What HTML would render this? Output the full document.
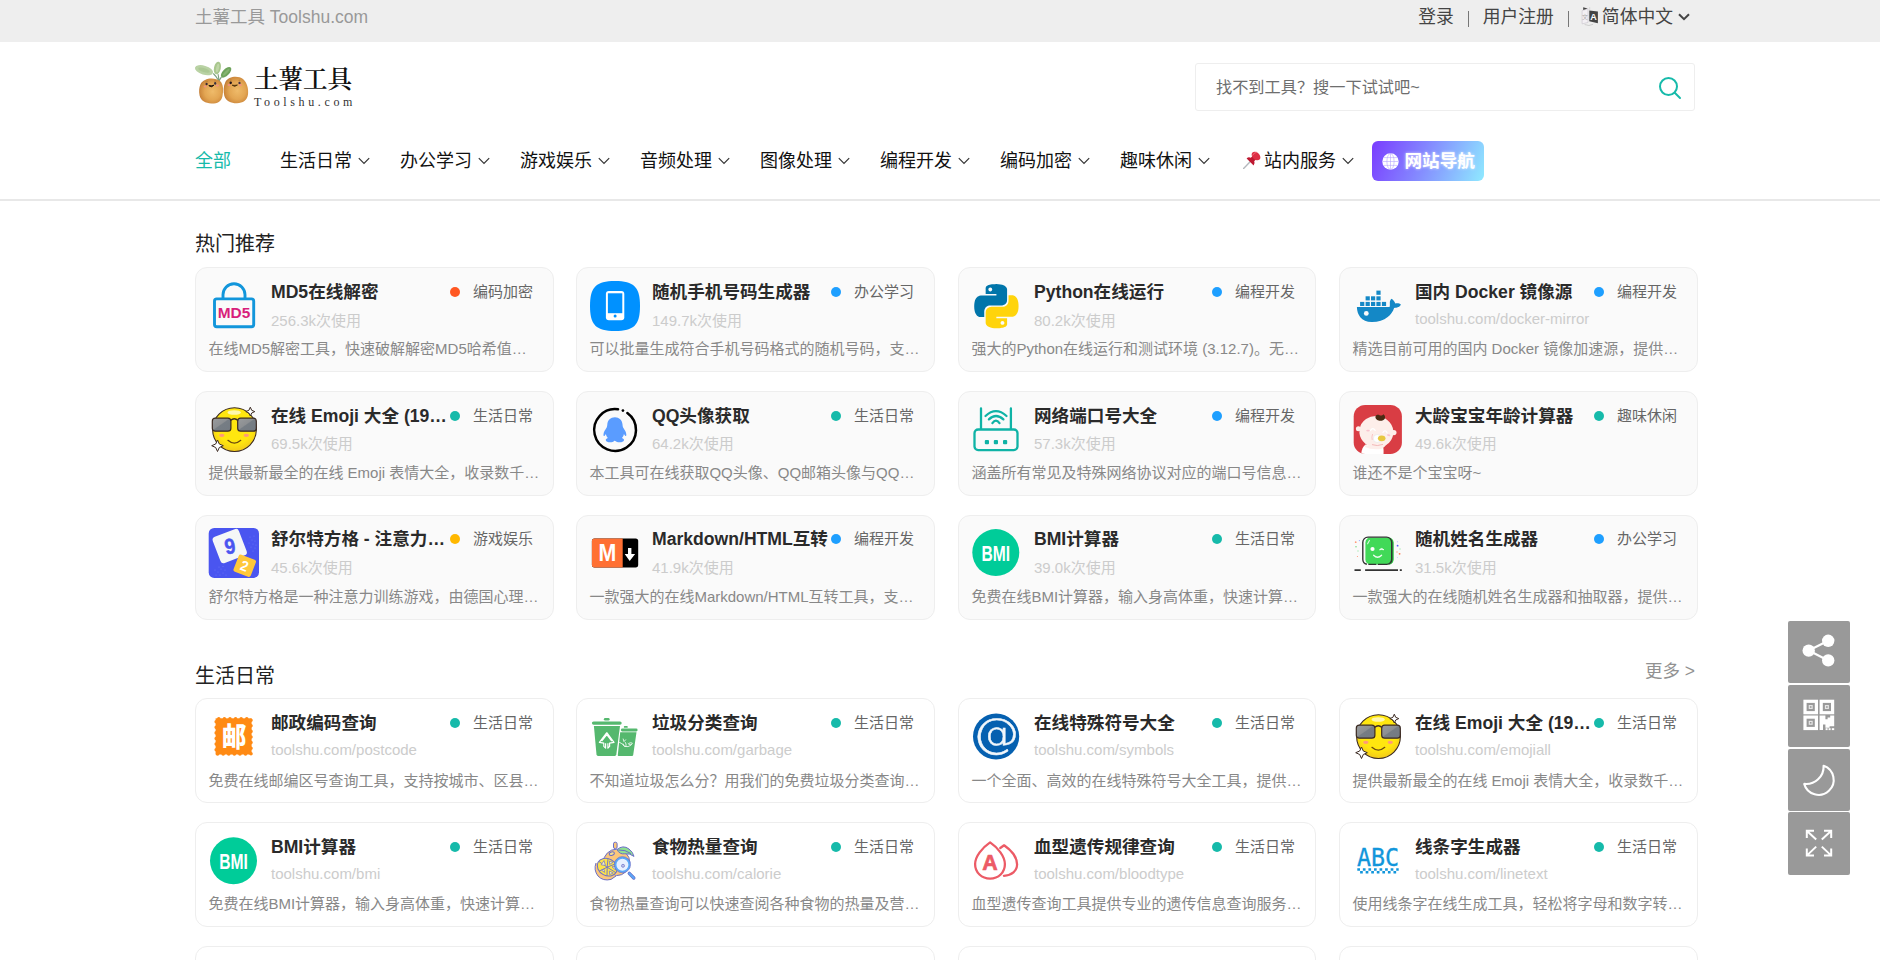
<!DOCTYPE html>
<html lang="zh-CN">
<head>
<meta charset="utf-8">
<title>土薯工具 Toolshu.com</title>
<style>
*{box-sizing:border-box;margin:0;padding:0}
html,body{width:1880px;height:960px;overflow:hidden;background:#fff}
body{font-family:"Liberation Sans","Noto Sans CJK SC",sans-serif;color:#333;position:relative}
a{color:inherit;text-decoration:none}
.topbar{position:absolute;left:0;top:0;width:1880px;height:42px;background:#eee}
.topbar .l{position:absolute;left:195px;top:0;line-height:35px;font-size:17.5px;color:#999}
.topbar .r{position:absolute;right:190px;top:0;height:34.6px;line-height:34.6px;font-size:17.8px;color:#444;white-space:nowrap;display:flex;align-items:center}
.topbar .r .sep{display:block;width:1px;height:16px;background:#777;margin:3px 14px 0 14px}
.topbar .r .chev{margin-left:5px;flex:none}
.logo{position:absolute;left:195px;top:60px;width:160px;height:50px}
.logo .t1{position:absolute;left:59px;top:3.4px;font-family:"Liberation Serif","Noto Serif CJK SC",serif;font-size:24.5px;line-height:34px;color:#111;font-weight:600;white-space:nowrap}
.logo .t2{position:absolute;left:59px;top:35px;font-family:"Liberation Serif",serif;font-size:12px;line-height:14px;letter-spacing:3.62px;color:#333;font-weight:normal;white-space:nowrap}
.search{position:absolute;left:1195px;top:63px;width:500px;height:48px;border:1px solid #eee;border-radius:3px;background:#fff}
.search span{position:absolute;left:20px;top:0;line-height:47px;font-size:16.2px;color:#6e6e6e}
.search svg{position:absolute;right:11px;top:11px}
.nav{position:absolute;left:0;top:141px;width:1880px;height:60px;border-bottom:2px solid #e8e8e8}
.nav .it{position:absolute;top:0;line-height:40px;font-size:18px;color:#111;white-space:nowrap}
.nav .it.on{color:#16baaa}
.nav .it svg{position:absolute;top:16px}
.navbtn{position:absolute;left:1372px;top:0;width:112px;height:40px;border-radius:6px;background:linear-gradient(112deg,#7a3cff 0%,#8590ff 50%,#8feaff 100%);color:#fff;font-size:17.6px;text-shadow:0 0 3px rgba(255,255,255,.7);font-weight:bold;line-height:40px;white-space:nowrap}
.navbtn span{position:absolute;left:32.5px;top:0}
.navbtn svg{position:absolute;left:9.5px;top:12px}
.sec{position:absolute;left:195px;font-size:20px;line-height:28px;color:#222}
.more{position:absolute;right:185px;font-size:17.5px;line-height:24px;color:#919191}
.card{position:absolute;width:358.6px;height:105px;border:1px solid #eee;border-radius:12px;background:#fff;overflow:hidden}
.card.hot{background:#fafafa}
.card .ic{position:absolute;left:13px;top:13px;width:50px;height:50px}
.card .tt{position:absolute;left:75px;top:11px;font-size:17.6px;line-height:26px;font-weight:bold;color:#2a2a2a;white-space:nowrap}
.card .sub{position:absolute;left:75px;top:43px;font-size:15px;line-height:20px;color:#ccc;white-space:nowrap}
.card .tag{position:absolute;right:20px;top:11px;font-size:15px;line-height:26px;color:#666;white-space:nowrap;background:inherit;padding-left:0}
.card .tag i{display:inline-block;width:10px;height:10px;border-radius:50%;margin-right:13px;vertical-align:0px}
.card .ds{position:absolute;left:12.4px;top:70px;font-size:15px;line-height:22px;color:#888;white-space:nowrap}
.card.rd .tt,.card.rd .tag,.card.rd .sub,.card.rb .sub{margin-top:-1px}
.card .sub.url{margin-top:-2px}
.card.rc .ds{margin-top:1px}
.ic svg{overflow:visible;display:block}
.c1{background:#ff5722}.c2{background:#1e9fff}.c3{background:#16baaa}.c4{background:#ffb800}
.side{position:absolute;left:1788px;width:62px;height:62px;background:#999;border-radius:2px}
.side svg{position:absolute;left:0;top:0}
</style>
</head>
<body>
<div class="topbar">
  <div class="l">土薯工具 Toolshu.com</div>
  <div class="r"><span>登录</span><span class="sep"></span><span>用户注册</span><span class="sep" style="margin-right:12px"></span><svg width="18" height="20" viewBox="0 0 17 19" style="margin:-2px 3px 0 0;flex:none"><path d="M1 4.4L6.600000000000001 2.6V15.6L1 17Z" fill="#f3f0f4" stroke="#c9c4cc" stroke-width="0.6"/><text x="3.8" y="12" font-family="Noto Sans CJK SC,sans-serif" font-size="5.6" fill="#aaa" text-anchor="middle">文</text><path d="M2 1.2L6.2 2.4L2 3.7Z" fill="#444"/><path d="M8.2 1V4" stroke="#ccc" stroke-width="0.6"/><path d="M7.8 4.2L16 5.2V16.4L7.8 14.4Z" fill="#444"/><text x="11.9" y="13.6" font-family="Liberation Sans,sans-serif" font-size="8.6" font-weight="bold" fill="#fff" text-anchor="middle">A</text><path d="M3.4 17.6Q7.6 19.6 11.4 17.4" fill="none" stroke="#bbb" stroke-width="0.6"/></svg><span>简体中文</span><svg class="chev" width="12" height="8" viewBox="0 0 12 8" fill="none" stroke="#444" stroke-width="2"><path d="M1 1.2L6 6.2L11 1.2"/></svg></div>
</div>
<div class="logo">
  <svg width="58" height="50" viewBox="0 0 58 50" style="position:absolute;left:-2px;top:0"><defs><radialGradient id="pt1" cx="0.56" cy="0.52" r="0.6"><stop offset="0" stop-color="#efbb6a"/><stop offset="0.55" stop-color="#e3a653"/><stop offset="0.88" stop-color="#cd883c"/><stop offset="1" stop-color="#b06a2c"/></radialGradient><filter id="lgb" x="-5%" y="-5%" width="110%" height="110%"><feGaussianBlur stdDeviation="0.4"/></filter></defs><g filter="url(#lgb)"><path d="M25.9 21Q23.6 16.6 20.3 13.5M25.9 21Q25.8 17 25 14.1M26.2 21Q27 18.6 28.5 17" fill="none" stroke="#7ba07e" stroke-width="1.1"/><ellipse cx="11" cy="10.2" rx="9.4" ry="4.5" transform="rotate(17 11 10.2)" fill="#b9d2a4"/><ellipse cx="11" cy="10.2" rx="6" ry="2" transform="rotate(17 11 10.2)" fill="#a8c690" opacity="0.8"/><ellipse cx="24.4" cy="8" rx="3.4" ry="6.4" transform="rotate(12 24.4 8)" fill="#a9c78e"/><ellipse cx="24.6" cy="8" rx="1.4" ry="4.4" transform="rotate(12 24.4 8)" fill="#c4d9ae" opacity="0.8"/><ellipse cx="33.1" cy="12.3" rx="3.3" ry="6.7" transform="rotate(44 33.1 12.3)" fill="#6ea35c"/><ellipse cx="33.1" cy="12.3" rx="1.2" ry="4.6" transform="rotate(44 33.1 12.3)" fill="#8fba78" opacity="0.7"/><path d="M7.6 24C10.600000000000001 17.6 22 16.8 27 21C30.6 24 30.6 31 29.4 36.4C28.2 41.6 24 43.8 18.4 43.6C12.4 43.4 7.6 40.6 6.6 35.6C5.8 31.6 6 27.4 7.6 24Z" fill="url(#pt1)"/><path d="M32.4 22C35.4 16.2 45 15 50 19C54 22.4 55.8 29 55 34.6C54.2 40.2 50 43.2 44 43.3C38 43.4 33 41 31.4 36C30.2 31.6 30.4 26 32.4 22Z" fill="url(#pt1)"/><ellipse cx="13.6" cy="24" rx="1.1" ry="1.3" fill="#3a2a36"/><ellipse cx="22.2" cy="23.4" rx="1.1" ry="1.3" fill="#3a3040"/><path d="M15.8 25.6Q18.3 28.200000000000003 21 25.2Q18.400000000000002 26 15.8 25.6Z" fill="#1e120c" stroke="#1e120c" stroke-width="0.9" stroke-linejoin="round"/><ellipse cx="12.2" cy="26.4" rx="1.5" ry="1" fill="#f48e88" opacity="0.85"/><ellipse cx="24.4" cy="25.4" rx="1.5" ry="1" fill="#f48e88" opacity="0.85"/><ellipse cx="37.7" cy="22.8" rx="1.2" ry="1.4" fill="#20141a"/><ellipse cx="46.5" cy="23" rx="1.1" ry="1.3" fill="#40304a"/><path d="M39.2 25.200000000000003Q41.6 27.6 44.4 25Q41.800000000000004 25.6 39.2 25.2Z" fill="#50340e" stroke="#50340e" stroke-width="0.9" stroke-linejoin="round"/><ellipse cx="36" cy="24.9" rx="1.5" ry="1" fill="#f48e88" opacity="0.85"/><ellipse cx="47.4" cy="25" rx="1.5" ry="1" fill="#f48e88" opacity="0.85"/><path d="M12.4 21.8Q13.6 21 14.8 21.6M21.2 21.2Q22.4 20.6 23.4 21.4M37 20.4Q37.8 19.8 38.6 20.2M45.6 20.4Q46.4 20 47.2 20.6" fill="none" stroke="#a8742e" stroke-width="0.6"/></g></svg>
  <div class="t1">土薯工具</div>
  <div class="t2">Toolshu.com</div>
</div>
<div class="search"><span>找不到工具？搜一下试试吧~</span>
<svg width="26" height="26" viewBox="0 0 26 26" fill="none" stroke="#16baaa" stroke-width="2" stroke-linecap="round"><circle cx="11.5" cy="11.5" r="8.5"/><path d="M18 18l5 5"/></svg>
</div>
<div class="nav">
  <div class="it on" style="left:195px">全部</div>
  <div class="it" style="left:280px">生活日常<svg width="12" height="8" viewBox="0 0 12 8" fill="none" stroke="#333" stroke-width="1.2" style="left:78px"><path d="M0.8 1.2L6 6.4L11.2 1.2"/></svg></div>
<div class="it" style="left:400px">办公学习<svg width="12" height="8" viewBox="0 0 12 8" fill="none" stroke="#333" stroke-width="1.2" style="left:78px"><path d="M0.8 1.2L6 6.4L11.2 1.2"/></svg></div>
<div class="it" style="left:520px">游戏娱乐<svg width="12" height="8" viewBox="0 0 12 8" fill="none" stroke="#333" stroke-width="1.2" style="left:78px"><path d="M0.8 1.2L6 6.4L11.2 1.2"/></svg></div>
<div class="it" style="left:640px">音频处理<svg width="12" height="8" viewBox="0 0 12 8" fill="none" stroke="#333" stroke-width="1.2" style="left:78px"><path d="M0.8 1.2L6 6.4L11.2 1.2"/></svg></div>
<div class="it" style="left:760px">图像处理<svg width="12" height="8" viewBox="0 0 12 8" fill="none" stroke="#333" stroke-width="1.2" style="left:78px"><path d="M0.8 1.2L6 6.4L11.2 1.2"/></svg></div>
<div class="it" style="left:880px">编程开发<svg width="12" height="8" viewBox="0 0 12 8" fill="none" stroke="#333" stroke-width="1.2" style="left:78px"><path d="M0.8 1.2L6 6.4L11.2 1.2"/></svg></div>
<div class="it" style="left:1000px">编码加密<svg width="12" height="8" viewBox="0 0 12 8" fill="none" stroke="#333" stroke-width="1.2" style="left:78px"><path d="M0.8 1.2L6 6.4L11.2 1.2"/></svg></div>
<div class="it" style="left:1120px">趣味休闲<svg width="12" height="8" viewBox="0 0 12 8" fill="none" stroke="#333" stroke-width="1.2" style="left:78px"><path d="M0.8 1.2L6 6.4L11.2 1.2"/></svg></div>
<div class="it" style="left:1264px">站内服务<svg width="12" height="8" viewBox="0 0 12 8" fill="none" stroke="#333" stroke-width="1.2" style="left:78px"><path d="M0.8 1.2L6 6.4L11.2 1.2"/></svg></div>
<svg width="18" height="18" viewBox="0 0 18 18" style="position:absolute;left:1243px;top:9.5px"><path d="M0.6 17.4L7.4 10.6" stroke="#b4b8bd" stroke-width="1.4" stroke-linecap="round"/><path d="M3.6 7.4L10.6 14.4Q12.4 12.4 11.2 10.2L14.6 6.8L11.2 3.4L7.8 6.800000000000001Q5.6 5.6 3.6 7.4Z" fill="#be1931"/><ellipse cx="13" cy="5" rx="5" ry="3.6" transform="rotate(45 13 5)" fill="#dd2e44"/><path d="M9.6 4.2Q10.8 1.6 13.6 1.2" fill="none" stroke="#f4707f" stroke-width="0.9" stroke-linecap="round"/></svg>
  <div class="navbtn"><svg width="17" height="17" viewBox="0 0 17 17"><circle cx="8.5" cy="8.5" r="8.2" fill="#fff"/><g fill="none" stroke="#a088ff" stroke-width="0.6" opacity="0.75"><ellipse cx="8.5" cy="8.5" rx="3.6" ry="8"/><path d="M8.5 0.5V16.5M0.5 8.5H16.5M1.6 4.6H15.4M1.6 12.4H15.4"/></g></svg><span>网站导航</span></div>
</div>
<div class="sec" style="top:230px">热门推荐</div>
<div class="sec" style="top:662px">生活日常</div>
<div class="more" style="top:659px">更多 &gt;</div>
<div class="card hot ra" style="left:195px;top:267px;width:359px"><div class="ic"><svg width="50" height="50" viewBox="0 0 50 50" fill="none"><g transform="translate(0.2,-0.7)"><path d="M13.8 18.4V14.4a11 11 0 0 1 22 0V18.4" stroke="#1296db" stroke-width="2.9"/><rect x="5.3" y="18.6" width="39.2" height="27.9" rx="2.2" stroke="#1296db" stroke-width="2.9"/><text x="24.8" y="37.6" font-family="Liberation Sans,sans-serif" font-size="15.4" font-weight="bold" fill="#d81e7b" text-anchor="middle">MD5</text></g></svg></div><div class="tt">MD5在线解密</div><div class="tag"><i class="c1"></i>编码加密</div><div class="sub">256.3k次使用</div><div class="ds">在线MD5解密工具，快速破解解密MD5哈希值…</div></div>
<div class="card hot ra" style="left:576px;top:267px;width:359px"><div class="ic"><svg width="50" height="50" viewBox="0 0 50 50"><path d="M25 0C44 0 50 6 50 25C50 44 44 50 25 50C6 50 0 44 0 25C0 6 6 0 25 0Z" fill="#0091ff"/><rect x="15.9" y="10.1" width="18.4" height="29.1" rx="3" fill="#fff"/><rect x="17.9" y="12.3" width="14.4" height="19.9" fill="#0091ff"/><circle cx="25.1" cy="35" r="1.5" fill="#0091ff"/></svg></div><div class="tt">随机手机号码生成器</div><div class="tag"><i class="c2"></i>办公学习</div><div class="sub">149.7k次使用</div><div class="ds">可以批量生成符合手机号码格式的随机号码，支…</div></div>
<div class="card hot ra" style="left:958px;top:267px;width:358px"><div class="ic"><svg width="50" height="50" viewBox="0 0 50 50"><g transform="translate(-0.3,0)"><g transform="translate(2.6,3.1) scale(1.84)"><path fill="#0075aa" d="M14.25.18l.9.2.73.26.59.3.45.32.34.34.25.34.16.33.1.3.04.26.02.2-.01.13V8.5l-.05.63-.13.55-.21.46-.26.38-.3.31-.33.25-.35.19-.35.14-.33.1-.3.07-.26.04-.21.02H8.77l-.69.05-.59.14-.5.22-.41.27-.33.32-.27.35-.2.36-.15.37-.1.35-.07.32-.04.27-.02.21v3.06H3.17l-.21-.03-.28-.07-.32-.12-.35-.18-.36-.26-.36-.36-.35-.46-.32-.59-.28-.73-.21-.88-.14-1.05-.05-1.23.06-1.22.16-1.04.24-.87.32-.71.36-.57.4-.44.42-.33.42-.24.4-.16.36-.1.32-.05.24-.01h.16l.06.01h8.16v-.83H6.18l-.01-2.75-.02-.37.05-.34.11-.31.17-.28.25-.26.31-.23.38-.2.44-.18.51-.15.58-.12.64-.1.71-.06.77-.04.84-.02 1.27.05zM7.95 2.16l-.23.33-.08.41.08.41.23.34.33.22.41.09.41-.09.33-.22.23-.34.08-.41-.08-.41-.23-.33-.33-.22-.41-.09-.41.09z"/><path fill="#ffd40b" d="M21.04 6.11l.28.06.32.12.35.18.36.27.36.35.35.47.32.59.28.73.21.88.14 1.04.05 1.23-.06 1.23-.16 1.04-.24.86-.32.71-.36.57-.4.45-.42.33-.42.24-.4.16-.36.09-.32.05-.24.02-.16-.01h-8.22v.82h5.84l.01 2.76.02.36-.05.34-.11.31-.17.29-.25.25-.31.24-.38.2-.44.17-.51.15-.58.13-.64.09-.71.07-.77.04-.84.01-1.27-.04-1.07-.14-.9-.2-.73-.25-.59-.3-.45-.33-.34-.34-.25-.34-.16-.33-.1-.3-.04-.25-.02-.2.01-.13v-5.34l.05-.64.13-.54.21-.46.26-.38.3-.32.33-.24.35-.2.35-.14.33-.1.3-.06.26-.04.21-.02.13-.01h5.84l.69-.05.59-.14.5-.21.41-.28.33-.32.27-.35.2-.36.15-.36.1-.35.07-.32.04-.28.02-.21V6.07h2.09l.14.01zM14.57 20.36l-.23.33-.08.41.08.41.23.33.33.23.41.08.41-.08.33-.23.23-.33.08-.41-.08-.41-.23-.33-.33-.23-.41-.08-.41.08z"/></g></g></svg></div><div class="tt">Python在线运行</div><div class="tag"><i class="c2"></i>编程开发</div><div class="sub">80.2k次使用</div><div class="ds">强大的Python在线运行和测试环境 (3.12.7)。无…</div></div>
<div class="card hot ra" style="left:1339px;top:267px;width:359px"><div class="ic"><svg width="50" height="50" viewBox="0 0 50 50" fill="#1488c6"><path d="M3.9 26H36.6C37.2 24.4 36.6 22.3 36.9 20.6C37.2 19.2 37.9 18.2 38.6 17.7C40.4 19 41.8 20.8 42.3 22.6C44.4 22.1 46.6 22.4 47.9 23.6C47.2 25.3 45.4 26.6 43.2 26.8C42.4 26.9 41.7 26.9 41.1 26.9C39.9 30.6 37.7 33.7 34.7 36.1C30.6 39.4 25 41.2 18.6 41.1C13.6 41 9.8 39.3 7.3 36.2C5.2 33.6 4 30.1 3.9 26Z"/><circle cx="13.3" cy="32.4" r="2.4" fill="#fafafa"/><g><rect x="7.1" y="20.9" width="4.2" height="4.1"/><rect x="12.6" y="20.9" width="4.2" height="4.1"/><rect x="18" y="20.9" width="4.2" height="4.1"/><rect x="23.4" y="20.9" width="4.2" height="4.1"/><rect x="28.9" y="20.9" width="4.2" height="4.1"/><rect x="12.6" y="15.3" width="4.2" height="4.1"/><rect x="18" y="15.3" width="4.2" height="4.1"/><rect x="23.4" y="15.3" width="4.2" height="4.1"/><rect x="23.4" y="9.6" width="4.2" height="4.2"/></g></svg></div><div class="tt">国内 Docker 镜像源</div><div class="tag"><i class="c2"></i>编程开发</div><div class="sub url">toolshu.com/docker-mirror</div><div class="ds">精选目前可用的国内 Docker 镜像加速源，提供…</div></div>
<div class="card hot rb" style="left:195px;top:391px;width:359px"><div class="ic"><svg width="50" height="50" viewBox="0 0 50 50"><defs><radialGradient id="emg" cx="0.5" cy="0.4" r="0.6"><stop offset="0.7" stop-color="#ffe60f"/><stop offset="1" stop-color="#f2c91a"/></radialGradient><linearGradient id="emq" x1="0" y1="0" x2="1" y2="1"><stop offset="0" stop-color="#9a9c9e"/><stop offset="0.45" stop-color="#8c8f92"/><stop offset="0.5" stop-color="#767d84"/><stop offset="1" stop-color="#737a82"/></linearGradient></defs><circle cx="25.5" cy="24.6" r="21.9" fill="url(#emg)" stroke="#3b2a22" stroke-width="1.1"/><ellipse cx="25.2" cy="7.5" rx="6.6" ry="2.3" fill="#fff7ae"/><path d="M21.5 15.5Q25.3 12 29 15.5" fill="none" stroke="#3b2a22" stroke-width="1.3"/><rect x="3.3" y="13.2" width="18.6" height="13" rx="3" fill="url(#emq)" stroke="#3b2a22" stroke-width="1.2"/><rect x="28.7" y="13.2" width="18.6" height="13" rx="3" fill="url(#emq)" stroke="#3b2a22" stroke-width="1.2"/><ellipse cx="12.8" cy="30.3" rx="2.7" ry="1.6" fill="#ff9a7a"/><ellipse cx="37.3" cy="30.3" rx="2.7" ry="1.6" fill="#ff9a7a"/><path d="M18.9 35.3Q25.3 41 31.8 35.3" fill="none" stroke="#6b4a10" stroke-width="1.2" stroke-linecap="round"/><path d="M41.3 2.2L42.7 5.3L45.8 6.6L42.7 8L41.3 11L39.9 8L36.8 6.6L39.9 5.3Z" fill="#fff" stroke="#3b2a22" stroke-width="1" stroke-linejoin="round"/><path d="M8.5 35L10.3 39L14.3 40.7L10.3 42.5L8.5 46.5L6.7 42.5L2.7 40.7L6.7 39Z" fill="#fff" stroke="#3b2a22" stroke-width="1" stroke-linejoin="round"/></svg></div><div class="tt">在线 Emoji 大全 (19…</div><div class="tag"><i class="c3"></i>生活日常</div><div class="sub">69.5k次使用</div><div class="ds">提供最新最全的在线 Emoji 表情大全，收录数千…</div></div>
<div class="card hot rb" style="left:576px;top:391px;width:359px"><div class="ic"><svg width="50" height="50" viewBox="0 0 50 50"><path d="M37.35 8.07A20.9 20.9 0 1 1 28.05 4.31" fill="none" stroke="#000" stroke-width="2.5" stroke-linecap="round"/><circle cx="32.93" cy="5.62" r="1.35" fill="#000"/><path d="M24.9 12.3C29.2 12.3 32.2 15.4 32.5 19.4C32.6 20.8 32.8 22 33.6 23.3C34.8 25.2 36.1 27 36.3 29.2C36.4 30.6 36 31.4 35.4 31C34.8 30.5 34.3 29.8 33.9 29C33.6 30.6 33 31.8 32 32.9C33.2 33.4 34.3 34 34 35.2C33.6 36.6 31.6 37.4 29.4 37.3C27.7 37.2 26.2 36.8 25.3 36C24.6 35.6 24.4 35.6 24.3 36C23.5 36.8 22 37.2 20.3 37.3C18.1 37.4 16.1 36.6 15.8 35.2C15.5 34 16.6 33.4 17.8 32.9C16.8 31.8 16.2 30.6 15.9 29C15.5 29.8 15 30.5 14.4 31C13.8 31.4 13.4 30.6 13.5 29.2C13.7 27 15 25.2 16.2 23.3C17 22 17.2 20.8 17.3 19.4C17.6 15.4 20.6 12.3 24.9 12.3Z" fill="#5a9cff"/></svg></div><div class="tt">QQ头像获取</div><div class="tag"><i class="c3"></i>生活日常</div><div class="sub">64.2k次使用</div><div class="ds">本工具可在线获取QQ头像、QQ邮箱头像与QQ…</div></div>
<div class="card hot rb" style="left:958px;top:391px;width:358px"><div class="ic"><svg width="50" height="50" viewBox="0 0 50 50" fill="none" stroke="#0fb3a6" stroke-width="2.3" stroke-linecap="round"><g transform="translate(-0.5,0.3)"><rect x="3" y="24.2" width="43" height="20.6" rx="3.6"/><path d="M9.5 3.2V23.5M39.4 3.2V23.5"/><path d="M14 10.7Q24.4 1 35 10.7M17.4 14.1Q24.4 7.400000000000001 31.9 14.1M20.9 17.8Q24.4 13 28 17.8"/><g fill="#0fb3a6" stroke="none"><rect x="13.3" y="34.7" width="4.2" height="4.2" rx="1"/><rect x="22.3" y="34.7" width="4.2" height="4.2" rx="1"/><rect x="31.5" y="34.7" width="4.2" height="4.2" rx="1"/></g></g></svg></div><div class="tt">网络端口号大全</div><div class="tag"><i class="c2"></i>编程开发</div><div class="sub">57.3k次使用</div><div class="ds">涵盖所有常见及特殊网络协议对应的端口号信息…</div></div>
<div class="card hot rb" style="left:1339px;top:391px;width:359px"><div class="ic"><svg width="50" height="50" viewBox="0 0 50 50"><defs><clipPath id="bbc"><rect x="0.7" y="0" width="48.2" height="48.9" rx="11.5"/></clipPath></defs><rect x="0.7" y="0" width="48.2" height="48.9" rx="11.5" fill="#d93d44"/><g clip-path="url(#bbc)"><path d="M8.2 49C8.5 44.5 10 41.5 12.5 39.5L30 41C30.6 43.5 30.7 46 30.5 49Z" fill="#fff"/><circle cx="5.4" cy="23.7" r="2.5" fill="#fdeeea"/><circle cx="40.8" cy="27.6" r="2.7" fill="#fdeeea"/><ellipse cx="23.4" cy="26.8" rx="17" ry="15.8" fill="#fdeeea" transform="rotate(8 23.4 26.8)"/><path d="M12 40Q22 43 32 37L34 39Q31 43 28 44Q18 45 12 42Z" fill="#fdeeea"/><path d="M19 39.6Q24 41.6 30 39.4" fill="none" stroke="#f2b8b8" stroke-width="1"/><path d="M22.4 11.8C22.6 9.7 25.2 9.3 26.5 10.2C27.8 10.9 29.6 10.6 30.4 9.2C31.6 10.2 32.6 11.8 31.9 13.4C31 15.6 27.8 16.2 25.6 15.6C23.6 15 22.2 13.6 22.4 11.8Z" fill="#4a2b14"/><path d="M17.4 25.6Q19.8 21.6 22.2 25.4" fill="none" stroke="#fff" stroke-width="1.2" stroke-linecap="round"/><path d="M30 27.5Q32.2 23.800000000000001 34.2 27.9" fill="none" stroke="#fff" stroke-width="1.2" stroke-linecap="round"/><ellipse cx="15" cy="25.6" rx="1.8" ry="0.9" fill="#f9c4cf"/><ellipse cx="35.6" cy="30.2" rx="1.8" ry="0.9" fill="#f9c4cf" transform="rotate(15 35.6 30.2)"/><circle cx="24.3" cy="33.5" r="4" fill="#fff"/><circle cx="24.3" cy="33.5" r="4" fill="none" stroke="#e4e4e4" stroke-width="0.6"/><ellipse cx="28.7" cy="33.3" rx="3.8" ry="2.9" fill="#e8c840"/><path d="M19.6 29Q18.400000000000002 32 19.2 35" fill="none" stroke="#f6b5b8" stroke-width="0.7"/></g></svg></div><div class="tt">大龄宝宝年龄计算器</div><div class="tag"><i class="c3"></i>趣味休闲</div><div class="sub">49.6k次使用</div><div class="ds">谁还不是个宝宝呀~</div></div>
<div class="card hot rd" style="left:195px;top:515px;width:359px"><div class="ic"><svg width="50" height="50" viewBox="0 0 50 50"><rect x="-0.3" y="-1" width="50.3" height="49.9" rx="5.5" fill="#4a55f0"/><g fill="#7f88f6" opacity="0.7"><circle cx="41" cy="8" r="0.5"/><circle cx="43" cy="11" r="0.5"/><circle cx="45" cy="7" r="0.5"/><circle cx="44" cy="15" r="0.5"/><circle cx="46" cy="12" r="0.5"/><circle cx="42" cy="18" r="0.5"/><circle cx="46" cy="19" r="0.5"/><circle cx="40" cy="14" r="0.5"/><circle cx="44" cy="22" r="0.5"/><circle cx="47" cy="16" r="0.5"/><circle cx="6" cy="41" r="0.5"/><circle cx="9" cy="43" r="0.5"/><circle cx="12" cy="40" r="0.5"/><circle cx="14" cy="44" r="0.5"/><circle cx="7" cy="46" r="0.5"/><circle cx="11" cy="46" r="0.5"/><circle cx="16" cy="41" r="0.5"/><circle cx="17" cy="46" r="0.5"/><circle cx="10" cy="38" r="0.5"/><circle cx="14" cy="37.5" r="0.5"/></g><g transform="rotate(-21 20.6 17)"><rect x="6.7" y="3.1" width="28" height="28" rx="3.4" fill="#f5f7f7"/></g><text x="20.8" y="24.6" font-family="Liberation Sans,sans-serif" font-size="21.6" font-weight="bold" fill="#4a55f0" stroke="#4a55f0" stroke-width="0.5" text-anchor="middle" transform="rotate(-10 20.8 17)" textLength="10.6" lengthAdjust="spacingAndGlyphs">9</text><g transform="rotate(21 35.6 36.8)"><rect x="26.5" y="27.5" width="18.4" height="18.4" rx="2.2" fill="#ffc83a"/><text x="35.6" y="42" font-family="Liberation Sans,sans-serif" font-size="14.4" font-weight="bold" fill="#fff" text-anchor="middle" textLength="7.4" lengthAdjust="spacingAndGlyphs">2</text></g></svg></div><div class="tt">舒尔特方格 - 注意力…</div><div class="tag"><i class="c4"></i>游戏娱乐</div><div class="sub">45.6k次使用</div><div class="ds">舒尔特方格是一种注意力训练游戏，由德国心理…</div></div>
<div class="card hot rd" style="left:576px;top:515px;width:359px"><div class="ic"><svg width="50" height="50" viewBox="0 0 50 50"><rect x="1.9" y="9.5" width="46.3" height="28.9" rx="2.6" fill="#000"/><path d="M4.5 9.5H32.7V38.4H4.5A2.6 2.6 0 0 1 1.9 35.8V12.1A2.6 2.6 0 0 1 4.5 9.5Z" fill="#ff7033"/><text x="17.3" y="32.4" font-family="Liberation Sans,sans-serif" font-size="23" font-weight="bold" fill="#fff" text-anchor="middle" textLength="17.8" lengthAdjust="spacingAndGlyphs">M</text><path d="M38 19.1H41.4V25.1H45.1L39.7 32.1L34.7 25.1H38Z" fill="#fff"/></svg></div><div class="tt">Markdown/HTML互转</div><div class="tag"><i class="c2"></i>编程开发</div><div class="sub">41.9k次使用</div><div class="ds">一款强大的在线Markdown/HTML互转工具，支…</div></div>
<div class="card hot rd" style="left:958px;top:515px;width:358px"><div class="ic"><svg width="50" height="50" viewBox="0 0 50 50"><g transform="translate(-0.5,0)"><circle cx="24.3" cy="23.6" r="23.5" fill="#00cc99"/><text x="10.1" y="31.6" font-family="Liberation Sans,sans-serif" font-size="21.8" font-weight="bold" fill="#fff" textLength="28.6" lengthAdjust="spacingAndGlyphs">BMI</text></g></svg></div><div class="tt">BMI计算器</div><div class="tag"><i class="c3"></i>生活日常</div><div class="sub">39.0k次使用</div><div class="ds">免费在线BMI计算器，输入身高体重，快速计算…</div></div>
<div class="card hot rd" style="left:1339px;top:515px;width:359px"><div class="ic"><svg width="50" height="50" viewBox="0 0 50 50"><rect x="12.4" y="8.5" width="28.2" height="26.9" rx="5" fill="#41d958"/><path d="M37 9.6Q39.6 11 39.6 14.5V30Q39.6 34 36 35" fill="none" stroke="#2cb43f" stroke-width="1.6"/><rect x="9.8" y="8.1" width="28.9" height="27.3" rx="5.2" fill="none" stroke="#333" stroke-width="1.4" stroke-dasharray="60 1.5 8 1.5 200"/><path d="M14.6 14.8L16.4 11.4" stroke="#fff" stroke-width="1.1" stroke-linecap="round" opacity="0.8"/><circle cx="19.5" cy="20" r="2.1" fill="#fff"/><path d="M26.400000000000002 20.8Q28.6 18 31 20.8Q28.700000000000003 20.3 26.4 20.8Z" fill="#fff" stroke="#fff" stroke-width="0.6" stroke-linejoin="round"/><path d="M20.6 26.3Q24.6 30.200000000000003 28.6 26.3" fill="none" stroke="#fff" stroke-width="1.3" stroke-linecap="round" opacity="0.9"/><path d="M1.5 41.1H7.8M12.1 41.1H45M46.8 41.1H48.8" stroke="#333" stroke-width="1.6"/><g><circle cx="2.7" cy="13.2" r="0.9" fill="#ff9a7a"/><circle cx="6.4" cy="11.6" r="0.6" fill="#9aa4ff"/><circle cx="3" cy="17.7" r="0.8" fill="#7fdc8b"/><circle cx="5" cy="22" r="0.8" fill="#b5ecc0"/><circle cx="4.5" cy="27.5" r="0.6" fill="#ff9a7a"/><circle cx="44.5" cy="12.8" r="0.7" fill="#c9cfff"/><circle cx="44.6" cy="16.7" r="0.9" fill="#5a5aff"/><circle cx="47" cy="20" r="0.8" fill="#b5ecc0"/><circle cx="44" cy="23" r="0.8" fill="#ffb39a"/><circle cx="46.6" cy="24.8" r="0.9" fill="#ff7a50"/><circle cx="44.5" cy="28.5" r="0.5" fill="#c9cfff"/></g></svg></div><div class="tt">随机姓名生成器</div><div class="tag"><i class="c2"></i>办公学习</div><div class="sub">31.5k次使用</div><div class="ds">一款强大的在线随机姓名生成器和抽取器，提供…</div></div>
<div class="card  rc" style="left:195px;top:698px;width:359px"><div class="ic"><svg width="50" height="50" viewBox="0 0 50 50"><rect x="6.6" y="6.3" width="36" height="36.2" fill="#ff8a14"/><rect x="7.2" y="6.9" width="34.8" height="35" fill="none" stroke="#ff8a14" stroke-width="3.6" stroke-linecap="round" stroke-dasharray="0 5.59" stroke-dashoffset="-2.6"/><text x="25" y="35.2" font-family="Noto Sans CJK SC,sans-serif" font-size="27" font-weight="900" fill="#fff" text-anchor="middle" textLength="24.6" lengthAdjust="spacingAndGlyphs">邮</text></svg></div><div class="tt">邮政编码查询</div><div class="tag"><i class="c3"></i>生活日常</div><div class="sub url">toolshu.com/postcode</div><div class="ds">免费在线邮编区号查询工具，支持按城市、区县…</div></div>
<div class="card  rc" style="left:576px;top:698px;width:359px"><div class="ic"><svg width="50" height="50" viewBox="0 0 50 50"><g fill="#55b86e"><rect x="13.9" y="6.1" width="5.7" height="2.4" rx="1.2"/><rect x="1.9" y="9.4" width="29.8" height="3.4" rx="1.7"/><path d="M3.9 14.1H30L26.3 42.6Q26.1 43.9 24.8 43.9H8Q6.700000000000001 43.9 6.5 42.6Z"/><rect x="33.8" y="14" width="4" height="1.8" rx="0.9"/><rect x="30.9" y="16.6" width="16.7" height="2.8" rx="1.4"/><path d="M30.2 20.3H46.5L43.2 42.9Q43 43.9 42 43.9H28.6Q27.6 43.9 27.8 42.9Z"/></g><path d="M16.8 20.6L9.4 30.4L13.8 31.2L13.8 34.4L15.6 36.2L15.6 31.200000000000003M16.8 20.6L24 30.4L19.6 31.2L19.6 34.4L17.9 36.2L17.9 31.2M11.6 29.2L16.8 22.6L21.8 29.2" fill="none" stroke="#fff" stroke-width="1.2" stroke-linejoin="round"/><path d="M29.6 30.5Q31.4 31 32.6 32.4Q34 35.4 38 34.600000000000005Q41.6 33.6 42.4 31.2Q41 30.2 39 31.2M33.2 27L34 29.6L35.6 27.8M33 31.8L34.6 34.4M35.4 30.4Q36.6 32 36 34.2M38 31.6Q38.6 32.6 40.4 32.6" fill="none" stroke="#fff" stroke-width="0.9" stroke-linecap="round" opacity="0.9"/></svg></div><div class="tt">垃圾分类查询</div><div class="tag"><i class="c3"></i>生活日常</div><div class="sub url">toolshu.com/garbage</div><div class="ds">不知道垃圾怎么分？用我们的免费垃圾分类查询…</div></div>
<div class="card  rc" style="left:958px;top:698px;width:358px"><div class="ic"><svg width="50" height="50" viewBox="0 0 50 50"><g transform="translate(-0.5,-0.3)"><circle cx="24.6" cy="24.8" r="23.1" fill="#0560b0"/><text x="1.3" y="35.7" font-family="DejaVu Sans,Liberation Sans,sans-serif" font-size="41" font-weight="200" fill="#fff" stroke="#fff" stroke-width="0.45" textLength="46.6" lengthAdjust="spacingAndGlyphs" opacity="0.95">@</text></g></svg></div><div class="tt">在线特殊符号大全</div><div class="tag"><i class="c3"></i>生活日常</div><div class="sub url">toolshu.com/symbols</div><div class="ds">一个全面、高效的在线特殊符号大全工具，提供…</div></div>
<div class="card  rc" style="left:1339px;top:698px;width:359px"><div class="ic"><svg width="50" height="50" viewBox="0 0 50 50"><defs><radialGradient id="emg" cx="0.5" cy="0.4" r="0.6"><stop offset="0.7" stop-color="#ffe60f"/><stop offset="1" stop-color="#f2c91a"/></radialGradient><linearGradient id="emq" x1="0" y1="0" x2="1" y2="1"><stop offset="0" stop-color="#9a9c9e"/><stop offset="0.45" stop-color="#8c8f92"/><stop offset="0.5" stop-color="#767d84"/><stop offset="1" stop-color="#737a82"/></linearGradient></defs><circle cx="25.5" cy="24.6" r="21.9" fill="url(#emg)" stroke="#3b2a22" stroke-width="1.1"/><ellipse cx="25.2" cy="7.5" rx="6.6" ry="2.3" fill="#fff7ae"/><path d="M21.5 15.5Q25.3 12 29 15.5" fill="none" stroke="#3b2a22" stroke-width="1.3"/><rect x="3.3" y="13.2" width="18.6" height="13" rx="3" fill="url(#emq)" stroke="#3b2a22" stroke-width="1.2"/><rect x="28.7" y="13.2" width="18.6" height="13" rx="3" fill="url(#emq)" stroke="#3b2a22" stroke-width="1.2"/><ellipse cx="12.8" cy="30.3" rx="2.7" ry="1.6" fill="#ff9a7a"/><ellipse cx="37.3" cy="30.3" rx="2.7" ry="1.6" fill="#ff9a7a"/><path d="M18.9 35.3Q25.3 41 31.8 35.3" fill="none" stroke="#6b4a10" stroke-width="1.2" stroke-linecap="round"/><path d="M41.3 2.2L42.7 5.3L45.8 6.6L42.7 8L41.3 11L39.9 8L36.8 6.6L39.9 5.3Z" fill="#fff" stroke="#3b2a22" stroke-width="1" stroke-linejoin="round"/><path d="M8.5 35L10.3 39L14.3 40.7L10.3 42.5L8.5 46.5L6.7 42.5L2.7 40.7L6.7 39Z" fill="#fff" stroke="#3b2a22" stroke-width="1" stroke-linejoin="round"/></svg></div><div class="tt">在线 Emoji 大全 (19…</div><div class="tag"><i class="c3"></i>生活日常</div><div class="sub url">toolshu.com/emojiall</div><div class="ds">提供最新最全的在线 Emoji 表情大全，收录数千…</div></div>
<div class="card  ra" style="left:195px;top:822px;width:359px"><div class="ic"><svg width="50" height="50" viewBox="0 0 50 50"><g transform="translate(0.2,1.2)"><circle cx="24.3" cy="23.6" r="23.5" fill="#00cc99"/><text x="10.1" y="31.6" font-family="Liberation Sans,sans-serif" font-size="21.8" font-weight="bold" fill="#fff" textLength="28.6" lengthAdjust="spacingAndGlyphs">BMI</text></g></svg></div><div class="tt">BMI计算器</div><div class="tag"><i class="c3"></i>生活日常</div><div class="sub url">toolshu.com/bmi</div><div class="ds">免费在线BMI计算器，输入身高体重，快速计算…</div></div>
<div class="card  ra" style="left:576px;top:822px;width:359px"><div class="ic"><svg width="50" height="50" viewBox="0 0 50 50" stroke="#6a6ec8" stroke-width="1" stroke-linejoin="round"><rect x="23.5" y="6.2" width="3.6" height="6.4" rx="1.6" fill="#fbc77a"/><circle cx="26.6" cy="26.4" r="13.2" fill="#fbc77a"/><ellipse cx="21.8" cy="17.6" rx="2.6" ry="1.7" fill="#f8e08a" transform="rotate(-15 21.8 17.6)"/><path d="M27 13.6Q33 8.5 39 13Q43 16 44 20.4Q39.6 17 34.8 17.8Q29.6 18.6 27 13.6Z" fill="#90e090"/><path d="M28.4 14Q35 13.4 41 17.6" fill="none"/><path d="M6 27Q3.4 34 8 40Q13 45.400000000000006 21 43.4L26 40" fill="#fbc77a"/><ellipse cx="17.2" cy="31.2" rx="10.4" ry="8.4" fill="#fbe34a" transform="rotate(28 17.2 31.2)"/><path d="M17.2 31.2L9 25.6M17.2 31.2L18 22.6M17.2 31.2L25 28M17.2 31.2L26 36.8M17.2 31.2L17 39.8M17.2 31.2L9.4 35" fill="none" stroke-width="0.9"/><path d="M11.2 28.8L14 24.6L15.4 29.4ZM19.6 25L22.8 26.4L19.6 28.4ZM14.6 36.4L14 33.2L11.6 34.2ZM19.4 35L19.6 38.6L23.2 37ZM22 30.8L25.2 30.4L25.6 34Z" fill="#f4f0c0" stroke-width="0.7"/><circle cx="32.4" cy="28.7" r="7" fill="#e8f0ff" stroke="#5aa8f8" stroke-width="2"/><circle cx="32.4" cy="28.7" r="8.1" fill="none" stroke-width="0.7"/><circle cx="33" cy="29.8" r="1.5" fill="#c0c6e8" stroke-width="0.7"/><path d="M39.3 37.4L43.8 42" stroke="#6a6ec8" stroke-width="3.4" stroke-linecap="round"/><path d="M39.3 37.4L43.8 42" stroke="#5aa8f8" stroke-width="2" stroke-linecap="round"/></svg></div><div class="tt">食物热量查询</div><div class="tag"><i class="c3"></i>生活日常</div><div class="sub url">toolshu.com/calorie</div><div class="ds">食物热量查询可以快速查阅各种食物的热量及营…</div></div>
<div class="card  ra" style="left:958px;top:822px;width:358px"><div class="ic"><svg width="50" height="50" viewBox="0 0 50 50" fill="none" stroke="#ec5b66" stroke-width="2.3" stroke-linecap="round" stroke-linejoin="round"><g transform="translate(-0.7,-0.2)"><path d="M18.8 6.6C11 12 3.8 20.4 3.8 28.4C3.8 36.6 10.4 42.8 18.8 42.8C27.200000000000003 42.8 33.6 36.6 33.6 28.4C33.6 20.4 26.6 12 18.8 6.6Z"/><path d="M29 12.2L32.8 9.5C39.8 14.4 45.8 21.6 45.8 28.8C45.8 35 40.6 39.6 32.6 40"/><text x="18.6" y="34" font-family="Liberation Sans,sans-serif" font-size="21.4" font-weight="bold" fill="#ec5b66" stroke="#ec5b66" stroke-width="0.7" text-anchor="middle">A</text></g></svg></div><div class="tt">血型遗传规律查询</div><div class="tag"><i class="c3"></i>生活日常</div><div class="sub url">toolshu.com/bloodtype</div><div class="ds">血型遗传查询工具提供专业的遗传信息查询服务…</div></div>
<div class="card  ra" style="left:1339px;top:822px;width:359px"><div class="ic"><svg width="50" height="50" viewBox="0 0 50 50"><g transform="translate(-0.3,0)"><text x="4.2" y="30.4" font-family="DejaVu Sans Mono,Liberation Mono,monospace" font-size="24.5" font-weight="normal" fill="#1296db" stroke="#1296db" stroke-width="0.3" textLength="42" lengthAdjust="spacingAndGlyphs">ABC</text><path d="M4.6 33.4H46" stroke="#1296db" stroke-width="2.5" stroke-dasharray="2.7 2.86"/><path d="M7.4 36.2H44" stroke="#1296db" stroke-width="2.5" stroke-dasharray="2.7 2.86"/></g></svg></div><div class="tt">线条字生成器</div><div class="tag"><i class="c3"></i>生活日常</div><div class="sub url">toolshu.com/linetext</div><div class="ds">使用线条字在线生成工具，轻松将字母和数字转…</div></div>
<div class="card " style="left:195px;top:946px;width:359px"></div>
<div class="card " style="left:576px;top:946px;width:359px"></div>
<div class="card " style="left:958px;top:946px;width:358px"></div>
<div class="card " style="left:1339px;top:946px;width:359px"></div>
<div class="side" style="top:621px;height:62px"><svg width="62" height="62" viewBox="0 0 62 62"><path d="M40.2 19.8L20.7 29.6L40.2 39.4" fill="none" stroke="#fff" stroke-width="2.2"/><circle cx="20.7" cy="29.6" r="6.2" fill="#fff"/><circle cx="40.2" cy="19.8" r="6.2" fill="#fff"/><circle cx="40.2" cy="39.4" r="6.2" fill="#fff"/></svg></div>
<div class="side" style="top:685px;height:62px"><svg width="62" height="62" viewBox="0 0 62 62"><g fill="none" stroke="#fff" stroke-width="3.2"><rect x="17" y="16.300000000000001" width="11.4" height="11.4"/><rect x="33.2" y="16.3" width="11.4" height="11.4"/><rect x="17" y="32.1" width="11.4" height="11.4"/></g><g fill="#fff" opacity="0.75"><rect x="20.7" y="20" width="4" height="4"/><rect x="36.9" y="20" width="4" height="4"/><rect x="20.7" y="35.8" width="4" height="4"/></g><g fill="#999"><rect x="21.9" y="21.2" width="1.6" height="1.6"/><rect x="38.1" y="21.2" width="1.6" height="1.6"/><rect x="21.9" y="37" width="1.6" height="1.6"/></g><path d="M31.6 30.5H37.4V34.2H39.6V32.4H42.2V30.5H46.2V41.3H41.6V42.8H37.4V39.4H35V45.1H31.6Z" fill="#fff"/><rect x="37.6" y="43.2" width="2" height="1.9" fill="#fff"/><rect x="40.6" y="43.2" width="2" height="1.9" fill="#fff"/><rect x="43.8" y="43.2" width="2.4" height="1.9" fill="#fff"/></svg></div>
<div class="side" style="top:749px;height:62px"><svg width="62" height="62" viewBox="0 0 62 62"><path d="M35.6 16.7A15 15 0 1 1 16.2 34.9A17.5 17.5 0 0 0 35.600000000000001 16.7Z" fill="none" stroke="#fff" stroke-width="2.1" stroke-linejoin="round"/></svg></div>
<div class="side" style="top:812px;height:63px"><svg width="62" height="62" viewBox="0 0 62 62" fill="none" stroke="#fff" stroke-width="2"><path d="M28.2 27.6L19 19M18.8 26V18.8H26M33.8 27.6L43 19M36 18.8H43.2V26M28.2 34.6L19 43.4M18.8 36.4V43.6H26M33.8 34.6L43 43.4M43.2 36.4V43.6H36"/></svg></div>
</body>
</html>
